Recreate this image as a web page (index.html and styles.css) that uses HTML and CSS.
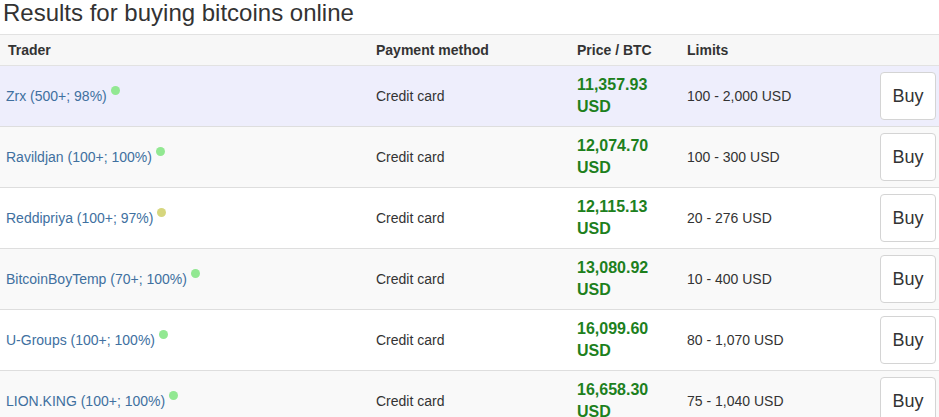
FILE: index.html
```html
<!DOCTYPE html>
<html>
<head>
<meta charset="utf-8">
<link rel="stylesheet" href="styles.css">
</head>
<body>
<h2 class="title">Results for buying bitcoins online</h2>
<table class="offers">
  <thead>
    <tr>
      <th class="c-trader">Trader</th>
      <th class="c-pay">Payment method</th>
      <th class="c-price">Price / BTC</th>
      <th class="c-limit">Limits</th>
      <th class="c-btn"></th>
    </tr>
  </thead>
  <tbody>
    <tr class="hover">
      <td class="trader-cell"><a class="trader">Zrx (500+; 98%)</a><span class="dot green"></span></td>
      <td>Credit card</td>
      <td class="price">11,357.93<br>USD</td>
      <td>100 - 2,000 USD</td>
      <td class="btn-cell"><button class="buy">Buy</button></td>
    </tr>
    <tr class="odd">
      <td class="trader-cell"><a class="trader">Ravildjan (100+; 100%)</a><span class="dot green"></span></td>
      <td>Credit card</td>
      <td class="price">12,074.70<br>USD</td>
      <td>100 - 300 USD</td>
      <td class="btn-cell"><button class="buy">Buy</button></td>
    </tr>
    <tr>
      <td class="trader-cell"><a class="trader">Reddipriya (100+; 97%)</a><span class="dot yellow"></span></td>
      <td>Credit card</td>
      <td class="price">12,115.13<br>USD</td>
      <td>20 - 276 USD</td>
      <td class="btn-cell"><button class="buy">Buy</button></td>
    </tr>
    <tr class="odd">
      <td class="trader-cell"><a class="trader">BitcoinBoyTemp (70+; 100%)</a><span class="dot green"></span></td>
      <td>Credit card</td>
      <td class="price">13,080.92<br>USD</td>
      <td>10 - 400 USD</td>
      <td class="btn-cell"><button class="buy">Buy</button></td>
    </tr>
    <tr>
      <td class="trader-cell"><a class="trader">U-Groups (100+; 100%)</a><span class="dot green"></span></td>
      <td>Credit card</td>
      <td class="price">16,099.60<br>USD</td>
      <td>80 - 1,070 USD</td>
      <td class="btn-cell"><button class="buy">Buy</button></td>
    </tr>
    <tr class="odd">
      <td class="trader-cell"><a class="trader">LION.KING (100+; 100%)</a><span class="dot green"></span></td>
      <td>Credit card</td>
      <td class="price">16,658.30<br>USD</td>
      <td>75 - 1,040 USD</td>
      <td class="btn-cell"><button class="buy">Buy</button></td>
    </tr>
  </tbody>
</table>
</body>
</html>
```
FILE: styles.css
```css
html, body {
  margin: 0;
  padding: 0;
  background: #fff;
  overflow: hidden;
}
body {
  font-family: "Liberation Sans", Arial, sans-serif;
  font-size: 14px;
  color: #333;
  width: 939px;
}
.title {
  margin: 0 0 8px 0;
  padding-left: 3px;
  font-size: 24px;
  font-weight: normal;
  line-height: 26px;
  color: #333;
}
.offers {
  border-collapse: collapse;
  width: 944px;
  table-layout: fixed;
}
.offers th {
  text-align: left;
  font-size: 14px;
  font-weight: bold;
  line-height: 20px;
  padding: 5px 8px;
  background: #f7f7f7;
  border-top: 1px solid #e2e2e2;
  border-bottom: 1px solid #e2e2e2;
  color: #333;
}
.c-trader { width: 352px; }
.c-pay { width: 185px; }
.c-price { width: 94px; }
.c-limit { width: 177px; }
.c-btn { width: 56px; }
.offers td {
  padding: 8px;
  line-height: 20px;
  vertical-align: middle;
  border-top: 1px solid #dedede;
}
.offers td.trader-cell {
  padding-left: 6px;
  padding-right: 10px;
}
.offers tbody tr:first-child td {
  border-top: none;
}
.offers tr.odd td { background: #f9f9f9; }
.offers tr.hover td { background: #eeeefc; }
.trader {
  color: #40709f;
  text-decoration: none;
}
.dot {
  display: inline-block;
  width: 9px;
  height: 9px;
  border-radius: 50%;
  margin-left: 4px;
  vertical-align: 6px;
}
.dot.green { background: #92e892; }
.dot.yellow { background: #d6d67e; }
.offers td.price {
  font-size: 16px;
  font-weight: bold;
  line-height: 22px;
  color: #1d801d;
}
.offers td.btn-cell {
  padding: 0 8px;
}
.buy {
  display: block;
  font-family: "Liberation Sans", Arial, sans-serif;
  font-size: 18px;
  line-height: 24px;
  padding: 11px 11px;
  width: 56px;
  color: #333;
  background: #fff;
  border: 1px solid #d4d4d4;
  border-radius: 4px;
}
```
